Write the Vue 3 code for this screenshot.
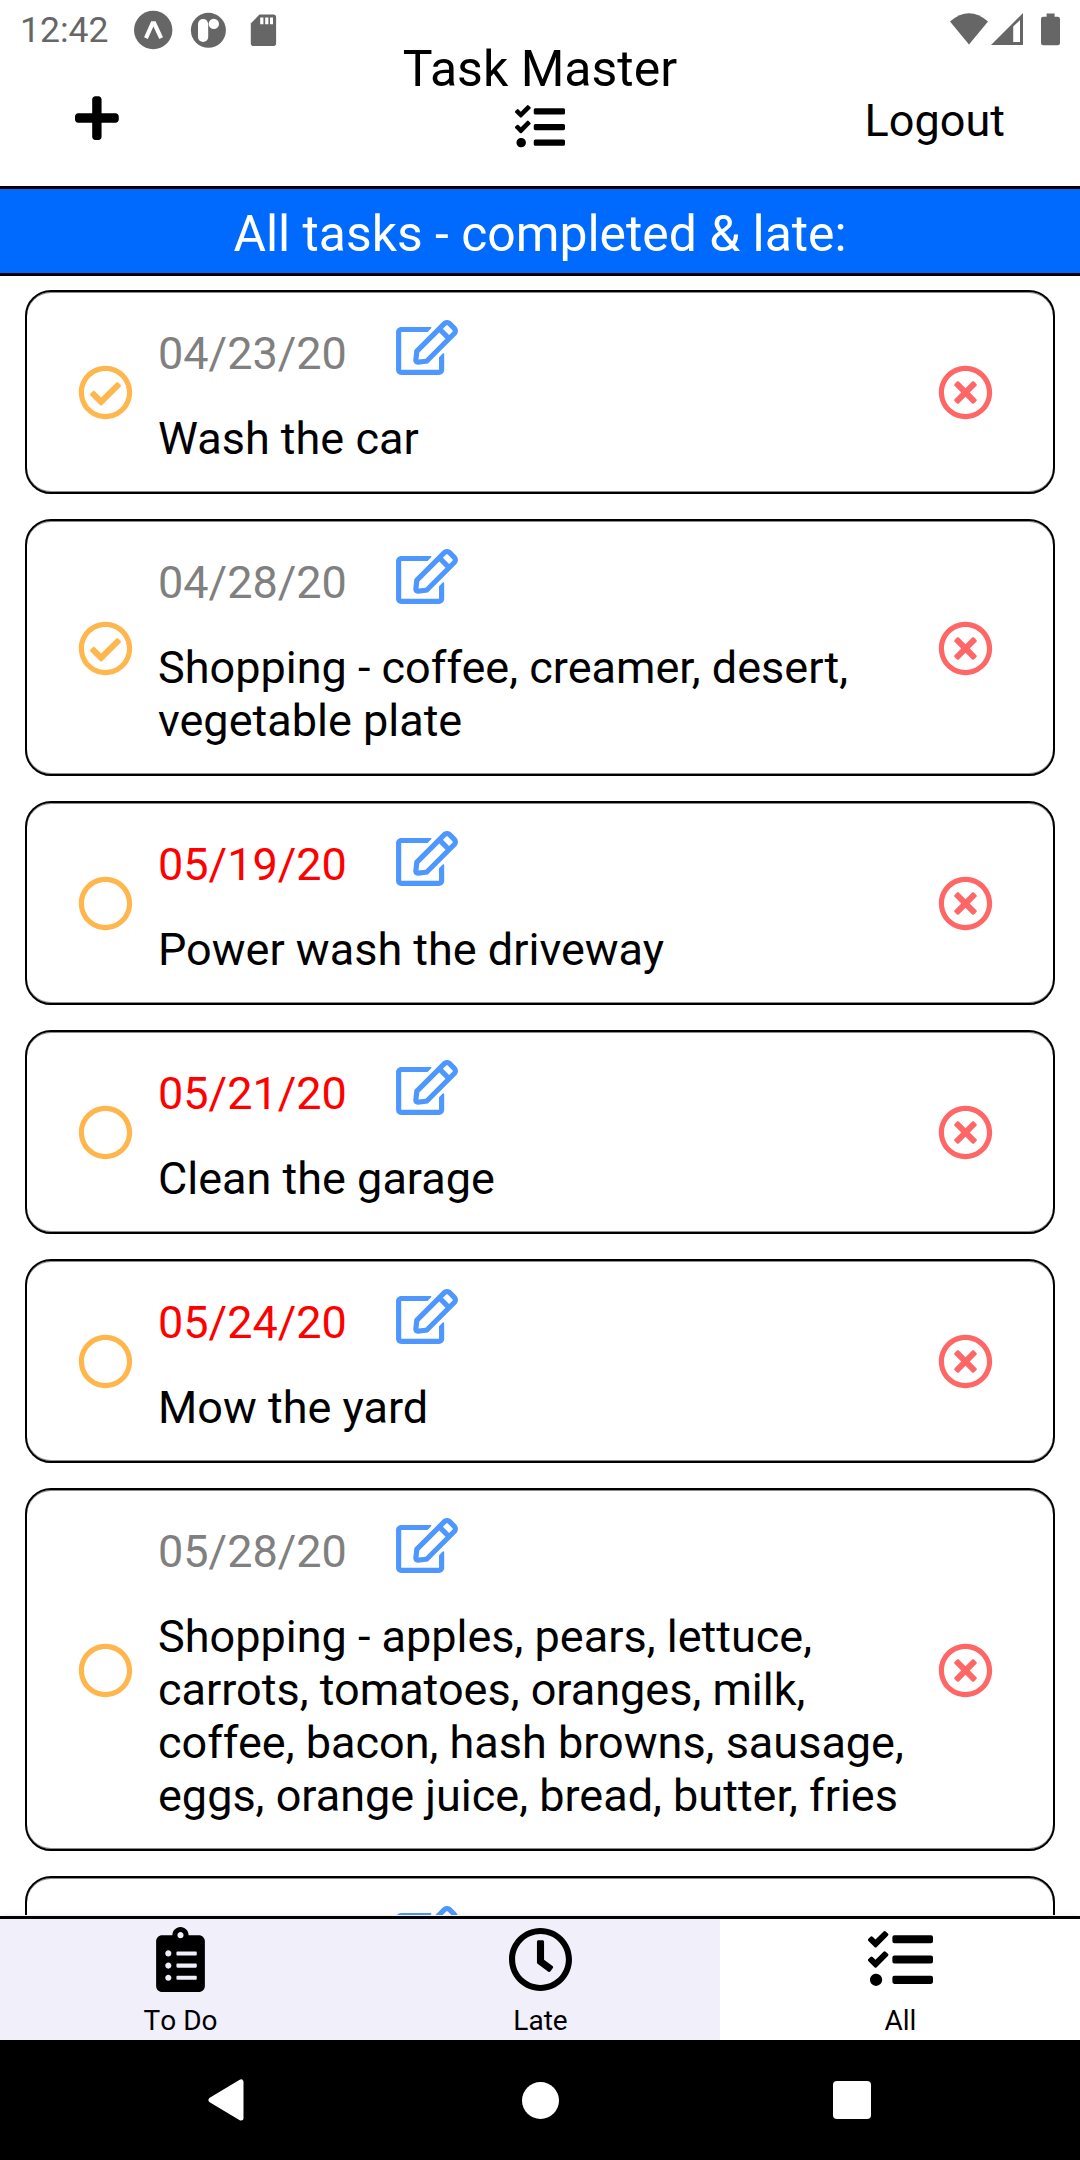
<script setup>
const tasks = [
  { id: 1, date: '04/23/20', title: 'Wash the car', done: true, late: false },
  { id: 2, date: '04/28/20', title: 'Shopping - coffee, creamer, desert, vegetable plate', done: true, late: false },
  { id: 3, date: '05/19/20', title: 'Power wash the driveway', done: false, late: true },
  { id: 4, date: '05/21/20', title: 'Clean the garage', done: false, late: true },
  { id: 5, date: '05/24/20', title: 'Mow the yard', done: false, late: true },
  {
    id: 6,
    date: '05/28/20',
    title: 'Shopping - apples, pears, lettuce, carrots, tomatoes, oranges, milk, coffee, bacon, hash browns, sausage, eggs, orange juice, bread, butter, fries',
    done: false,
    late: false,
  },
  { id: 7, date: '', title: '', done: false, late: false },
]

const icons = {
  tasks: 'M139.61 35.5a12 12 0 0 0-17 0L58.93 98.81l-22.7-22.12a12 12 0 0 0-17 0L3.53 92.41a12 12 0 0 0 0 17l47.59 47.4a12.78 12.78 0 0 0 17.61 0l15.59-15.62L156.52 69a12.09 12.09 0 0 0 .09-17zm0 159.19a12 12 0 0 0-17 0l-63.68 63.72-22.7-22.1a12 12 0 0 0-17 0L3.53 252a12 12 0 0 0 0 17L51 316.5a12.77 12.77 0 0 0 17.6 0l15.7-15.69 72.2-72.22a12 12 0 0 0 .09-16.9zM64 368c-26.49 0-48.59 21.5-48.59 48S37.53 464 64 464a48 48 0 0 0 0-96zm432 16H208a16 16 0 0 0-16 16v32a16 16 0 0 0 16 16h288a16 16 0 0 0 16-16v-32a16 16 0 0 0-16-16zm0-320H208a16 16 0 0 0-16 16v32a16 16 0 0 0 16 16h288a16 16 0 0 0 16-16V80a16 16 0 0 0-16-16zm0 160H208a16 16 0 0 0-16 16v32a16 16 0 0 0 16 16h288a16 16 0 0 0 16-16v-32a16 16 0 0 0-16-16z',
  clipboard: 'M336 64h-80c0-35.3-28.7-64-64-64s-64 28.7-64 64H48C21.5 64 0 85.5 0 112v352c0 26.5 21.5 48 48 48h288c26.5 0 48-21.5 48-48V112c0-26.5-21.5-48-48-48zM96 424c-13.3 0-24-10.7-24-24s10.7-24 24-24 24 10.7 24 24-10.7 24-24 24zm0-96c-13.3 0-24-10.7-24-24s10.7-24 24-24 24 10.7 24 24-10.7 24-24 24zm0-96c-13.3 0-24-10.7-24-24s10.7-24 24-24 24 10.7 24 24-10.7 24-24 24zm96-192c13.3 0 24 10.7 24 24s-10.7 24-24 24-24-10.7-24-24 10.7-24 24-24zm128 368c0 4.4-3.6 8-8 8H168c-4.4 0-8-3.6-8-8v-16c0-4.4 3.6-8 8-8h144c4.4 0 8 3.6 8 8v16zm0-96c0 4.4-3.6 8-8 8H168c-4.4 0-8-3.6-8-8v-16c0-4.4 3.6-8 8-8h144c4.4 0 8 3.6 8 8v16zm0-96c0 4.4-3.6 8-8 8H168c-4.4 0-8-3.6-8-8v-16c0-4.4 3.6-8 8-8h144c4.4 0 8 3.6 8 8v16z',
  clock: 'M256 8C119 8 8 119 8 256s111 248 248 248 248-111 248-248S393 8 256 8zm0 448c-110.5 0-200-89.5-200-200S145.5 56 256 56s200 89.5 200 200-89.5 200-200 200zm61.8-104.4l-84.9-61.7c-3.1-2.3-4.9-5.9-4.9-9.7V116c0-6.6 5.4-12 12-12h32c6.6 0 12 5.4 12 12v141.7l66.8 48.6c5.4 3.9 6.5 11.4 2.6 16.8L334.6 349c-3.9 5.3-11.4 6.5-16.8 2.6z',
  plus: 'M416 208H272V64c0-17.67-14.33-32-32-32h-32c-17.67 0-32 14.33-32 32v144H32c-17.67 0-32 14.33-32 32v32c0 17.67 14.33 32 32 32h144v144c0 17.67 14.33 32 32 32h32c17.67 0 32-14.33 32-32V304h144c17.67 0 32-14.33 32-32v-32c0-17.67-14.33-32-32-32z',
  edit: 'M402.3 344.9l32-32c5-5 13.7-1.5 13.7 5.7V464c0 26.5-21.5 48-48 48H48c-26.5 0-48-21.5-48-48V112c0-26.5 21.5-48 48-48h273.5c7.1 0 10.7 8.6 5.7 13.7l-32 32c-1.5 1.5-3.5 2.3-5.7 2.3H48v352h352V350.5c0-2.1.8-4.1 2.3-5.6zm156.6-201.8L296.3 405.7l-90.4 10c-26.2 2.9-48.5-19.2-45.6-45.6l10-90.4L432.9 17.1c22.9-22.9 59.9-22.9 82.7 0l43.2 43.2c22.9 22.9 22.9 60 .1 82.8zM460.1 174L402 115.9 216.2 301.8l-7.3 65.3 65.3-7.3L460.1 174zm64.8-79.7l-43.2-43.2c-4.1-4.1-10.8-4.1-14.8 0L436 82l58.1 58.1 30.9-30.9c4-4.2 4-10.8-.1-14.9z',
  circle: 'M256 8C119 8 8 119 8 256s111 248 248 248 248-111 248-248S393 8 256 8zm0 448c-110.5 0-200-89.5-200-200S145.5 56 256 56s200 89.5 200 200-89.5 200-200 200z',
  check: 'M256 8C119.033 8 8 119.033 8 256s111.033 248 248 248 248-111.033 248-248S392.967 8 256 8zm0 48c110.532 0 200 89.451 200 200 0 110.532-89.451 200-200 200-110.532 0-200-89.451-200-200 0-110.532 89.451-200 200-200m140.204 130.267l-22.536-22.718c-4.667-4.705-12.265-4.736-16.97-.068L215.346 303.697l-59.792-60.277c-4.667-4.705-12.265-4.736-16.97-.069l-22.719 22.536c-4.705 4.667-4.736 12.265-.068 16.971l90.781 91.516c4.667 4.705 12.265 4.736 16.97.068l172.589-171.204c4.704-4.668 4.734-12.266.067-16.971z',
  times: 'M256 8C119 8 8 119 8 256s111 248 248 248 248-111 248-248S393 8 256 8zm0 448c-110.5 0-200-89.5-200-200S145.5 56 256 56s200 89.5 200 200-89.5 200-200 200zm101.8-262.2L295.6 256l62.2 62.2c4.7 4.7 4.7 12.3 0 17l-22.6 22.6c-4.7 4.7-12.3 4.7-17 0L256 295.6l-62.2 62.2c-4.7 4.7-12.3 4.7-17 0l-22.6-22.6c-4.7-4.7-4.7-12.3 0-17l62.2-62.2-62.2-62.2c-4.7-4.7-4.7-12.3 0-17l22.6-22.6c4.7-4.7 12.3-4.7 17 0l62.2 62.2 62.2-62.2c4.7-4.7 12.3-4.7 17 0l22.6 22.6c4.7 4.7 4.7 12.3 0 17z',
}

const tabs = [
  { label: 'To Do', icon: icons.clipboard, viewBox: '-64 0 512 512', active: false },
  { label: 'Late', icon: icons.clock, viewBox: '0 0 512 512', active: false },
  { label: 'All', icon: icons.tasks, viewBox: '0 0 512 512', active: true },
]
</script>

<template>
  <div class="screen">
    <div class="status">
      <span class="time">12:42</span>
      <svg class="left-icons" width="150" height="60" viewBox="130 0 150 60">
        <circle cx="153.2" cy="30" r="19.2" />
        <path class="cut" d="M151.2 21.2h4.4l7.4 16-3.7 1.9-5.9-12.6-5.6 12.6-3.7-1.9z" />
        <circle cx="208.4" cy="30.3" r="17.5" />
        <rect class="cut" x="198" y="19" width="10.2" height="23" rx="5.1" />
        <circle class="cut" cx="213.8" cy="23.9" r="5.2" />
        <path d="M259.4 14.6h13.9a2.8 2.8 0 0 1 2.8 2.8v25.9a2.8 2.8 0 0 1-2.8 2.8h-19.7a2.8 2.8 0 0 1-2.8-2.8V23.4z" />
        <path class="cut" d="M260.2 17.5h3.2v6.8h-3.2zM265.2 17.5h3.2v6.8h-3.2zM270 17.5h3v6.8h-3z" />
      </svg>
      <svg class="right-icons" width="130" height="60" viewBox="940 0 130 60">
        <path d="M969 44.4 950 21.5Q969 5 988 21.5z" />
        <path fill-rule="evenodd" d="M1023 13v32h-32zM1013.2 26.6V42h6.8V20z" />
        <path d="M1046.6 13.5h8v3.2h3.2a2.2 2.2 0 0 1 2.2 2.2v24.2a2.2 2.2 0 0 1-2.2 2.2h-14.6a2.2 2.2 0 0 1-2.2-2.2V18.9a2.2 2.2 0 0 1 2.2-2.2h3.4z" />
      </svg>
    </div>

    <header class="header">
      <div class="side">
        <svg class="plus" viewBox="0 0 448 512"><path :d="icons.plus" /></svg>
      </div>
      <div class="brand">
        <div class="name">Task Master</div>
        <svg class="brand-icon" viewBox="0 0 512 512"><path :d="icons.tasks" /></svg>
      </div>
      <div class="side end">Logout</div>
    </header>

    <div class="banner">All tasks - completed &amp; late:</div>

    <main class="list">
      <article v-for="task in tasks" :key="task.id" class="card">
        <svg class="round toggle" viewBox="0 0 512 512"><path :d="task.done ? icons.check : icons.circle" /></svg>
        <div class="body">
          <div class="meta">
            <span class="date" :class="{ late: task.late }">{{ task.date }}</span>
            <svg class="edit" viewBox="0 0 576 512"><path :d="icons.edit" /></svg>
          </div>
          <div class="title">{{ task.title }}</div>
        </div>
        <svg class="round remove" viewBox="0 0 512 512"><path :d="icons.times" /></svg>
      </article>
    </main>

    <nav class="tabs">
      <div v-for="tab in tabs" :key="tab.label" class="tab" :class="{ active: tab.active }">
        <svg class="tab-icon" :viewBox="tab.viewBox"><path :d="tab.icon" /></svg>
        <span class="tab-label">{{ tab.label }}</span>
      </div>
    </nav>

    <div class="system">
      <svg width="36" height="42" viewBox="0 0 36 42">
        <path d="M3 21 33 3v36z" fill="#fff" stroke="#fff" stroke-width="5" stroke-linejoin="round" />
      </svg>
      <span class="home"></span>
      <span class="recent"></span>
    </div>
  </div>
</template>

<style>
body {
  margin: 0;
}
</style>

<style scoped>
.screen {
  position: relative;
  display: flex;
  flex-direction: column;
  width: 1080px;
  height: 2160px;
  overflow: hidden;
  background: #fff;
  color: #000;
  font-family: Roboto, "Liberation Sans", sans-serif;
  font-size: 45px;
  line-height: 53px;
}
svg {
  display: block;
  flex: none;
}
.status {
  position: absolute;
  top: 0;
  left: 0;
  width: 1080px;
  height: 60px;
  box-sizing: border-box;
  padding: 0 10px 0 20px;
  display: flex;
  align-items: center;
  color: #666;
  fill: #666;
}
.time {
  width: 110px;
  font-size: 35.5px;
  line-height: 60px;
}
.cut {
  fill: #fff;
}
.right-icons {
  margin-left: auto;
}
.header {
  flex: none;
  height: 186px;
  box-sizing: border-box;
  padding: 39px 75px 0;
  display: flex;
  justify-content: space-between;
}
.side {
  width: 240px;
  padding-top: 55px;
}
.end {
  text-align: right;
}
.plus {
  width: 43.75px;
  height: 50px;
  margin-top: -1px;
}
.brand {
  display: flex;
  flex-direction: column;
  align-items: center;
}
.name {
  padding-top: 1px;
  font-size: 50px;
  line-height: 59px;
}
.brand-icon {
  width: 50px;
  height: 50px;
  margin-top: 3px;
}
.banner {
  flex: none;
  height: 84px;
  border-top: 3px solid #000;
  border-bottom: 3px solid #000;
  background: #006aff;
  color: #fff;
  font-size: 49.85px;
  line-height: 90px;
  text-align: center;
}
.list {
  flex: none;
  height: 1639px;
  box-sizing: border-box;
  padding: 14px 25px 0;
  display: flex;
  flex-direction: column;
  gap: 25px;
  overflow: hidden;
}
.card {
  flex: none;
  min-height: 204px;
  box-sizing: border-box;
  display: flex;
  align-items: center;
  padding: 0 60px 0 51px;
  border: 2px solid #000;
  border-radius: 26px;
  box-shadow: inset 0 1px #8a8a8a, inset 0 -1px #8a8a8a;
}
.round {
  width: 55px;
  height: 55px;
  margin-top: 1px;
}
.toggle {
  fill: #ffb74d;
}
.remove {
  fill: #ff6666;
}
.body {
  flex: 1;
  margin: 0 23px 0 25px;
  padding: 28px 0 27px;
}
.meta {
  display: flex;
  align-items: flex-start;
  height: 92px;
}
.title {
  min-height: 53px;
}
.date {
  width: 238px;
  margin-top: 7px;
  color: #808080;
}
.date.late {
  color: #ff0000;
}
.edit {
  width: 62px;
  height: 55px;
  fill: #4d97ff;
}
.tabs {
  flex: none;
  height: 121px;
  margin-top: 1px;
  border-top: 3px solid #000;
  box-shadow: 0 0 6px rgba(0, 0, 0, 0.1);
  display: flex;
}
.tab {
  flex: 1;
  display: flex;
  flex-direction: column;
  align-items: center;
  padding-top: 8px;
  background: #f0effa;
}
.tab.active {
  background: #fff;
}
.tab-icon {
  width: 65px;
  height: 65px;
}
.tab-label {
  font-size: 28px;
  line-height: 33px;
  margin-top: 12px;
  padding-left: 1px;
  font-kerning: none;
}
.system {
  flex: none;
  height: 120px;
  background: #000;
  display: flex;
  align-items: center;
  justify-content: space-between;
  padding: 0 209px 0 208px;
}
.home {
  width: 37px;
  height: 37px;
  margin-left: 3px;
  border-radius: 50%;
  background: #fff;
}
.recent {
  width: 38px;
  height: 38px;
  border-radius: 4px;
  background: #fff;
}
</style>
